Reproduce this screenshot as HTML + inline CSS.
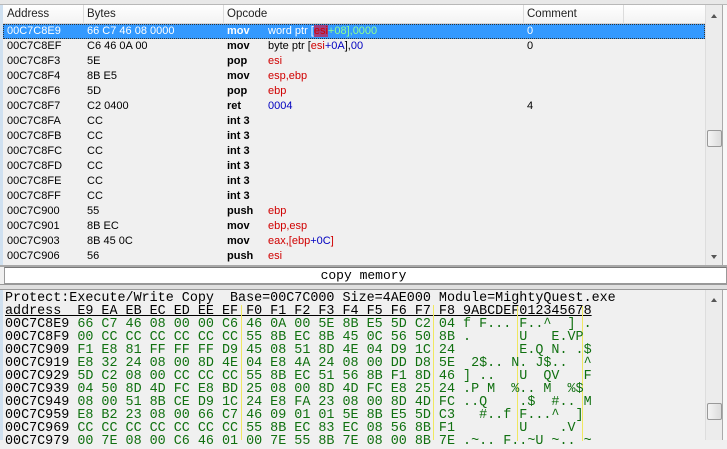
<!DOCTYPE html>
<html><head><meta charset="utf-8"><style>
*{margin:0;padding:0;box-sizing:border-box}
body{width:727px;height:440px;overflow:hidden;background:#f0f0f0;position:relative;font-family:"Liberation Sans",sans-serif;font-size:11px;color:#000}
.abs{position:absolute}
.hdr{top:5px;left:3px;width:702px;height:19px;background:linear-gradient(#fff,#f3f3f3);border-bottom:1px solid #d5d5d5}
.hdr span{position:absolute;top:3px;font-size:11.5px;color:#222}
.hdr i{position:absolute;top:0;width:1px;height:19px;background:#dcdcdc}
.row{position:absolute;left:3px;width:702px;height:15px;line-height:15px;white-space:nowrap}
.row span{position:absolute}
.a{left:4px}.b{left:84px}.m{left:224px;font-weight:bold;font-family:"Liberation Sans",sans-serif}.o{left:265px}.c{left:524px}
.r{color:#d00000}.bl{color:#0000c0}
.sel{background:#3399ff;color:#fff;outline:1px dotted #333;outline-offset:-1px}
.sb{position:absolute;background:#ececec;border-left:1px solid #ddd}
.thumb{position:absolute;left:1px;width:15px;background:linear-gradient(90deg,#f4f4f4,#dcdcdc);border:1px solid #999;border-radius:2px}
.mono{font-family:"Liberation Mono",monospace;font-size:13.4px;white-space:pre;position:absolute;left:5px;line-height:13px}
.g{color:#107010}
.yl{position:absolute;width:1px;background:#f0e860;top:305px;height:135px}
</style></head><body>
<div class="abs" style="left:0;top:0;width:727px;height:5px;background:#e8e8e8;border-bottom:1px solid #b8b8b8"></div>
<div class="abs" style="left:0;top:5px;width:3px;height:260px;background:#cfe0f0"></div>
<div class="abs hdr">
<span style="left:4px">Address</span><i style="left:80px"></i>
<span style="left:84px">Bytes</span><i style="left:220px"></i>
<span style="left:224px">Opcode</span><i style="left:520px"></i>
<span style="left:524px">Comment</span><i style="left:620px"></i>
</div>
<div class="row sel" style="top:24px"><span class="a">00C7C8E9</span><span class="b">66 C7 46 08 0000</span><span class="m">mov</span><span class="o">word ptr [<b style="font-weight:normal;color:#d00000;background:#a04080">esi</b><span style="position:static;color:#90ff90">+08],0000</span></span><span class="c">0</span></div>
<div class="row" style="top:39px"><span class="a">00C7C8EF</span><span class="b">C6 46 0A 00</span><span class="m">mov</span><span class="o">byte ptr [<span class="r" style="position:static">esi</span><span class="bl" style="position:static">+0A</span>],<span class="bl" style="position:static">00</span></span><span class="c">0</span></div>
<div class="row" style="top:54px"><span class="a">00C7C8F3</span><span class="b">5E</span><span class="m">pop</span><span class="o r">esi</span></div>
<div class="row" style="top:69px"><span class="a">00C7C8F4</span><span class="b">8B E5</span><span class="m">mov</span><span class="o r">esp,ebp</span></div>
<div class="row" style="top:84px"><span class="a">00C7C8F6</span><span class="b">5D</span><span class="m">pop</span><span class="o r">ebp</span></div>
<div class="row" style="top:99px"><span class="a">00C7C8F7</span><span class="b">C2 0400</span><span class="m">ret</span><span class="o bl">0004</span><span class="c">4</span></div>
<div class="row" style="top:114px"><span class="a">00C7C8FA</span><span class="b">CC</span><span class="m">int 3</span></div>
<div class="row" style="top:129px"><span class="a">00C7C8FB</span><span class="b">CC</span><span class="m">int 3</span></div>
<div class="row" style="top:144px"><span class="a">00C7C8FC</span><span class="b">CC</span><span class="m">int 3</span></div>
<div class="row" style="top:159px"><span class="a">00C7C8FD</span><span class="b">CC</span><span class="m">int 3</span></div>
<div class="row" style="top:174px"><span class="a">00C7C8FE</span><span class="b">CC</span><span class="m">int 3</span></div>
<div class="row" style="top:189px"><span class="a">00C7C8FF</span><span class="b">CC</span><span class="m">int 3</span></div>
<div class="row" style="top:204px"><span class="a">00C7C900</span><span class="b">55</span><span class="m">push</span><span class="o r">ebp</span></div>
<div class="row" style="top:219px"><span class="a">00C7C901</span><span class="b">8B EC</span><span class="m">mov</span><span class="o r">ebp,esp</span></div>
<div class="row" style="top:234px"><span class="a">00C7C903</span><span class="b">8B 45 0C</span><span class="m">mov</span><span class="o"><span class="r" style="position:static">eax,[ebp</span><span class="bl" style="position:static">+0C</span><span class="r" style="position:static">]</span></span></div>
<div class="row" style="top:249px"><span class="a">00C7C906</span><span class="b">56</span><span class="m">push</span><span class="o r">esi</span></div>
<div class="sb" style="left:705px;top:5px;width:17px;height:260px"><div style="position:absolute;left:5px;top:9px;border:3px solid transparent;border-bottom:4px solid #555;border-top:0"></div><div class="thumb" style="top:125px;height:17px"></div><div style="position:absolute;left:5px;top:250px;border:3px solid transparent;border-top:4px solid #555;border-bottom:0"></div></div>
<div class="abs" style="left:722px;top:5px;width:5px;height:260px;background:#f8f8f8;border-left:1px solid #aaa"></div>
<div class="abs" style="left:0;top:265px;width:727px;height:2px;background:#a8a8a8"></div>
<div class="abs" style="left:4px;top:267px;width:723px;height:17px;background:#fff;border:1px solid #999;border-top-color:#777"></div>
<div class="abs" style="left:0;top:267px;width:727px;height:17px;text-align:center;font-family:'Liberation Mono',monospace;font-size:13px;line-height:17px">copy memory</div>
<div class="abs" style="left:0;top:284px;width:727px;height:6px;background:#e0e0e0;border-top:1px solid #999;border-bottom:1px solid #999"></div>
<div class="abs" style="left:0;top:290px;width:3px;height:150px;background:#cfe0f0"></div>
<div class="mono" style="top:292px">Protect:Execute/Write Copy  Base=00C7C000 Size=4AE000 Module=MightyQuest.exe</div>
<div class="mono" style="top:305px;text-decoration:underline">address  E9 EA EB EC ED EE EF F0 F1 F2 F3 F4 F5 F6 F7 F8 9ABCDEF012345678</div>
<div class="yl" style="left:241px"></div><div class="yl" style="left:433px"></div><div class="yl" style="left:517px;top:306px"></div><div class="yl" style="left:582px;top:306px"></div>
<div class="mono" style="top:318px">00C7C8E9 <span class="g">66 C7 46 08 00 00 C6 46 0A 00 5E 8B E5 5D C2 04 f F... F..^  ] .</span>
00C7C8F9 <span class="g">00 CC CC CC CC CC CC 55 8B EC 8B 45 0C 56 50 8B .      U   E.VP </span>
00C7C909 <span class="g">F1 E8 81 FF FF FF D9 45 08 51 8D 4E 04 D9 1C 24        E.Q N. .$</span>
00C7C919 <span class="g">E8 32 24 08 00 8D 4E 04 E8 4A 24 08 00 DD D8 5E  2$.. N. J$..  ^</span>
00C7C929 <span class="g">5D C2 08 00 CC CC CC 55 8B EC 51 56 8B F1 8D 46 ] ..   U  QV   F</span>
00C7C939 <span class="g">04 50 8D 4D FC E8 BD 25 08 00 8D 4D FC E8 25 24 .P M  %.. M  %$</span>
00C7C949 <span class="g">08 00 51 8B CE D9 1C 24 E8 FA 23 08 00 8D 4D FC ..Q    .$  #.. M</span>
00C7C959 <span class="g">E8 B2 23 08 00 66 C7 46 09 01 01 5E 8B E5 5D C3   #..f F...^  ]</span>
00C7C969 <span class="g">CC CC CC CC CC CC CC 55 8B EC 83 EC 08 56 8B F1        U    .V</span>
00C7C979 <span class="g">00 7E 08 00 C6 46 01 00 7E 55 8B 7E 08 00 8B 7E .~.. F..~U ~.. ~</span></div>
<div class="sb" style="left:705px;top:290px;width:17px;height:150px"><div style="position:absolute;left:5px;top:8px;border:3px solid transparent;border-bottom:4px solid #555;border-top:0"></div><div class="thumb" style="top:113px;height:17px"></div></div>
<div class="abs" style="left:722px;top:290px;width:5px;height:150px;background:#f8f8f8;border-left:1px solid #aaa"></div>
</body></html>
